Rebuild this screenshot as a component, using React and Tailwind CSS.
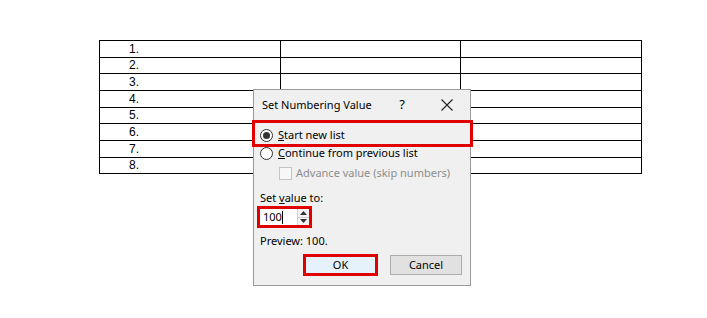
import React from 'react';

const rows = ['1.', '2.', '3.', '4.', '5.', '6.', '7.', '8.'];

function Radio({ checked }) {
  return (
    <span className="w-[13px] h-[13px] rounded-full border border-[#333] bg-white flex items-center justify-center shrink-0">
      {checked && <span className="w-[7px] h-[7px] rounded-full bg-[#333]" />}
    </span>
  );
}

export default function App() {
  return (
    <div className="relative w-[707px] h-[318px] bg-white overflow-hidden" style={{ fontFamily: '"Noto Sans", "Open Sans", sans-serif' }}>
      {/* Word table */}
      <div className="pt-[40px] pl-[99px]">
        <table className="border-collapse w-[543px] table-fixed">
          <tbody>
            {rows.map((r) => (
              <tr key={r} className="h-[16.67px]">
                <td className="border border-black p-0 pl-[29px] text-[12px] leading-none text-black" style={{ fontFamily: '"Liberation Sans", sans-serif' }}>{r}</td>
                <td className="border border-black p-0" />
                <td className="border border-black p-0" />
              </tr>
            ))}
          </tbody>
        </table>
      </div>

      {/* Dialog */}
      <div className="absolute left-[253px] top-[89px] w-[218px] h-[197px] bg-[#f0f0f0] border border-[#9a9a9a] text-[11px] text-black">
        {/* title bar */}
        <div className="h-[30px] flex items-center pl-[8px]">
          <span>Set Numbering Value</span>
          <span className="ml-auto mr-[36px] text-[13px]">?</span>
          <svg className="mr-[17px]" width="12" height="12" viewBox="0 0 12 12">
            <path d="M0.5 0.5 L11.5 11.5 M11.5 0.5 L0.5 11.5" stroke="#222" strokeWidth="1.1" />
          </svg>
        </div>

        <div className="pl-[6px] pt-[6px]">
          <div className="h-[18px] flex items-center gap-[5px]">
            <Radio checked />
            <span><span className="underline">S</span>tart new list</span>
          </div>
          <div className="h-[19px] flex items-center gap-[5px]">
            <Radio />
            <span><span className="underline">C</span>ontinue from previous list</span>
          </div>
          <div className="h-[21px] flex items-center gap-[4px] pl-[19px]">
            <span className="w-[13px] h-[13px] border border-[#c4c4c4] bg-[#f7f7f7] shrink-0" />
            <span className="text-[#8d8d8d]">Advance value (skip numbers)</span>
          </div>

          <div className="mt-[7px] h-[15px] flex items-center">
            <span>Set <span className="underline">v</span>alue to:</span>
          </div>
          <div className="-ml-[3px] w-[55px] h-[22px] border-[3px] border-[#e00000] bg-white flex">
            <div className="flex-1 flex items-center pl-[3px]">
              <span>100</span>
              <span className="w-px h-[13px] bg-black" />
            </div>
            <div className="w-[12px] border-l border-[#d0d0d0] bg-[#f4f4f4] flex flex-col">
              <div className="flex-1 flex items-center justify-center border-b border-[#d0d0d0]">
                <svg width="7" height="4" viewBox="0 0 7 4"><path d="M0 4 L3.5 0 L7 4 Z" fill="#333" /></svg>
              </div>
              <div className="flex-1 flex items-center justify-center">
                <svg width="7" height="4" viewBox="0 0 7 4"><path d="M0 0 L3.5 4 L7 0 Z" fill="#333" /></svg>
              </div>
            </div>
          </div>
          <div className="mt-[5px] h-[16px] flex items-center">Preview: 100.</div>
        </div>

        <div className="mt-[5px] flex items-center justify-end pr-[8px] gap-[12px]">
          <button className="w-[75px] h-[22px] border-[3px] border-[#e00000] bg-[#e5f1fb] flex items-center justify-center">OK</button>
          <button className="w-[72px] h-[20px] border border-[#adadad] bg-[#e1e1e1] flex items-center justify-center">Cancel</button>
        </div>

        {/* annotation around "Start new list" */}
        <div className="absolute left-[-2px] top-[30px] w-[221px] h-[27px] border-[3px] border-[#e00000] pointer-events-none" />
      </div>
    </div>
  );
}
